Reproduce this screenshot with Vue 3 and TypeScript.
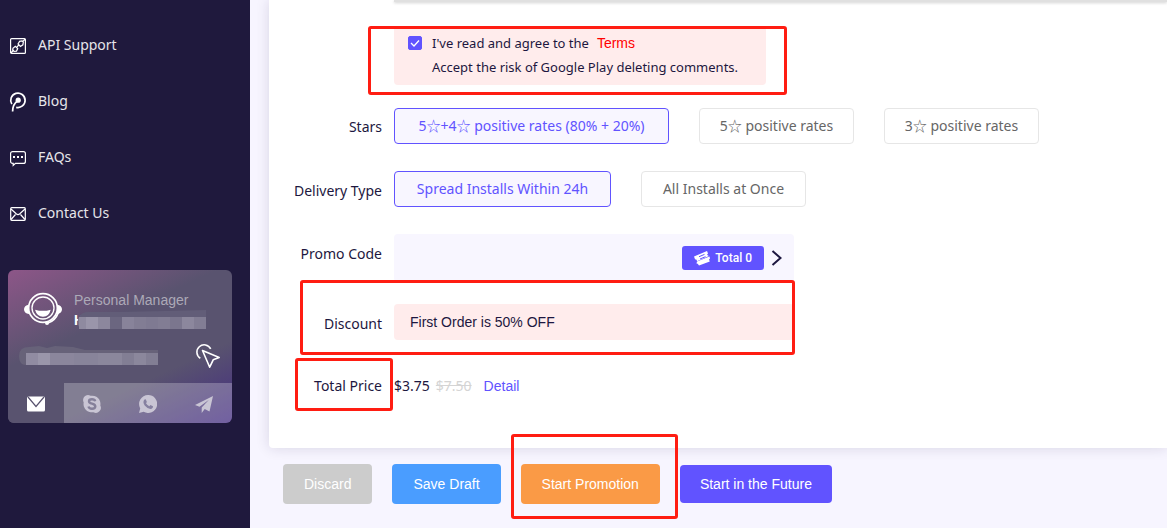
<script setup lang="ts">
import { ref } from 'vue'

const nav = [
  { id: 'api', label: 'API Support' },
  { id: 'blog', label: 'Blog' },
  { id: 'faq', label: 'FAQs' },
  { id: 'contact', label: 'Contact Us' },
]
const channels = [
  { id: 'mail', label: 'Email' },
  { id: 'skype', label: 'Skype' },
  { id: 'whatsapp', label: 'WhatsApp' },
  { id: 'telegram', label: 'Telegram' },
]
const starOptions = ['5☆+4☆ positive rates (80% + 20%)', '5☆ positive rates', '3☆ positive rates']
const deliveryOptions = ['Spread Installs Within 24h', 'All Installs at Once']

const agreed = ref(true)
const channel = ref('mail')
const stars = ref(starOptions[0])
const delivery = ref(deliveryOptions[0])

const nameTiles = ['#8f8aa0', '#9a95aa', '#8c879d', '#6b6680', '#88839a', '#827d94', '#7f7a92', '#827d94', '#7b768e', '#8c879d', '#827d94']
const mailTiles = ['#918ca2', '#9a96aa', '#8b869c', '#8b869c', '#88849a', '#88849a', '#8b879c', '#8b879c', '#827e94', '#8b879c', '#827e94']
</script>

<template>
  <div class="page">
    <aside class="sidebar">
      <nav class="nav">
        <a v-for="item in nav" :key="item.id" href="#" class="nav-link">
          <svg v-if="item.id === 'api'" class="nav-icon" viewBox="0 0 16 20">
            <rect x="0.6" y="3.6" width="14.8" height="14.8" rx="1" />
            <path d="M1 18l2.600-3M12.700 6.600L15.200 4M6.500 12.500l2.600-2.800" />
            <path d="M3 13.200l2.300-1.800 2.400 2.200-1.200 2.500-2.500.3-1.300-1.500zM8 9l1.600-2.600 2.500-.5 1.200 1.300-.4 2.600L10.400 11.400z" />
          </svg>
          <svg v-else-if="item.id === 'blog'" class="nav-icon bold" viewBox="0 0 16 20">
            <path d="M1.800 13.100A7.200 7.200 0 1 1 6.200 16.300" />
            <path d="M7.500 10C4.500 12 2.600 15 2.600 20.500" />
            <circle class="solid" cx="8.200" cy="9.200" r="2.600" />
          </svg>
          <svg v-else-if="item.id === 'faq'" class="nav-icon" viewBox="0 0 16 20">
            <path d="M2.600 4.600h10.800a2 2 0 0 1 2 2v7.800a2 2 0 0 1-2 2H5.500L3.200 18.500V16.400H2.600a2 2 0 0 1-2-2V6.600a2 2 0 0 1 2-2z" />
            <path class="solid" d="M3 9h2v2H3zM7 9h2v2H7zM11 9h2v2h-2z" />
          </svg>
          <svg v-else class="nav-icon" viewBox="0 0 16 20">
            <rect x="0.700" y="4.700" width="14.600" height="12.600" rx="1" />
            <path d="M1 6l5.200 4.800q1.800 1.500 3.600 0L15 6M1 16.500l4.500-5M15 16.500l-4.500-5" />
          </svg>
          <span>{{ item.label }}</span>
        </a>
      </nav>

      <section class="manager">
        <div class="manager-head">
          <svg class="avatar" viewBox="0 0 114 98">
            <circle cx="57" cy="46" r="43" fill="none" stroke="#fff" stroke-width="5" />
            <circle cx="57" cy="46" r="33" fill="none" stroke="#fff" stroke-width="4" />
            <path d="M15 36v28Q0 62 0 50T15 36zM99 36v28q15-2 15-14T99 36z" fill="#fff" />
            <path d="M33 51q24 7 47 0-5 21-23 21T33 51z" fill="#fff" />
            <path d="M103 60Q94 84 72 91" fill="none" stroke="#fff" stroke-width="5" />
            <circle cx="69" cy="91" r="6" fill="#fff" />
          </svg>
          <div>
            <div class="role">Personal Manager</div>
            <div class="name">
              <b>H</b>
              <svg class="tiles" viewBox="0 0 132 20">
                <path d="M5 7Q8 2 14 2H44L92 1 132 0V7z" fill="#625d78" />
                <path d="M5 7h8v12H6Q2 12 5 7z" fill="#77728a" />
                <rect v-for="(c, i) in nameTiles" :key="i" :x="i ? 12 + (i - 1) * 12 : 5" y="7" :width="i ? 12 : 7" height="12" :fill="c" />
              </svg>
            </div>
          </div>
        </div>
        <div class="manager-mail">
          <svg class="mail-tiles" viewBox="0 0 140 20">
            <path d="M7 19Q0 19 0 10T10 1L20 0 28 2 36 0 54 1 66 4H139V9L7 19z" fill="#676279" />
            <rect v-for="(c, i) in mailTiles" :key="i" :x="7 + i * 12" y="7" width="12" height="12" :fill="c" />
          </svg>
          <svg class="pointer" viewBox="0 0 24 24">
            <path d="M6.500 6.500l16.700 7-6 2.300-3.500 7.400z" />
            <path d="M4.300 14.300A7.300 7.300 0 1 1 14.700 4.800" />
          </svg>
        </div>
        <div class="channels">
          <button
            v-for="c in channels"
            :key="c.id"
            type="button"
            class="channel"
            :class="{ active: channel === c.id }"
            :aria-label="c.label"
            @click="channel = c.id"
          >
            <svg viewBox="0 0 18 18">
              <template v-if="c.id === 'mail'">
                <rect y="1.500" width="18" height="15" rx="1.500" />
                <path class="cut" d="M1 2l8 9.500L17 2" />
              </template>
              <template v-else-if="c.id === 'skype'">
                <path d="M5 0a5 5 0 0 0-4.300 7.400A8.300 8.300 0 0 0 10.500 17.200 5 5 0 0 0 17.300 10.500 8.300 8.300 0 0 0 7.500.8 5 5 0 0 0 5 0z" />
                <path class="cut thick" d="M12.200 6.200Q11.700 4.300 9 4.300 6 4.300 6 6.300 6 8 9 8.700T12.300 11.300Q12.300 13.700 9 13.700 6 13.700 5.500 11.500" />
              </template>
              <template v-else-if="c.id === 'whatsapp'">
                <path d="M9 0a9 9 0 0 0-7.800 13.400L0 18l4.700-1.200A9 9 0 1 0 9 0z" />
                <path class="hole" d="M5.500 4.500l1.200-.2 1.200 2.700-.9 1.300Q8.300 10.500 10.300 11.300L11.400 10l2.600 1.200q.2 2.400-2.500 2.700Q8.500 14 5.700 10.600 3.300 7 5.500 4.500z" />
              </template>
              <template v-else>
                <path d="M18 1L0 10l4.500 1.700L14 4.800 6.700 12.500V18l3-4 4.800 2.600z" />
              </template>
            </svg>
          </button>
        </div>
      </section>
    </aside>

    <main class="main">
      <form class="card" @submit.prevent>
        <div class="row row-top"><div class="strip"></div></div>

        <div class="row row-terms">
          <div class="terms">
            <input id="agree" v-model="agreed" type="checkbox" class="check" />
            <div>
              <label for="agree">I've read and agree to the</label>
              <a href="#" class="terms-link">Terms</a>
              <div>Accept the risk of Google Play deleting comments.</div>
            </div>
            <span class="mark mark-terms"></span>
          </div>
        </div>

        <div class="row row-stars" role="group" aria-labelledby="l-stars">
          <span id="l-stars" class="label">Stars</span>
          <div class="options star-options">
            <button v-for="o in starOptions" :key="o" type="button" class="option" :class="{ on: stars === o }" @click="stars = o">{{ o }}</button>
          </div>
        </div>

        <div class="row row-delivery" role="group" aria-labelledby="l-delivery">
          <span id="l-delivery" class="label">Delivery Type</span>
          <div class="options delivery-options">
            <button v-for="o in deliveryOptions" :key="o" type="button" class="option" :class="{ on: delivery === o }" @click="delivery = o">{{ o }}</button>
          </div>
        </div>

        <div class="row row-promo">
          <span class="label">Promo Code</span>
          <div class="promo">
            <button type="button" class="total">
              <svg viewBox="0 0 16 16">
                <path d="M0 6.500L13 1l1 2.500-1 1.200 1.300 1 .7.300L3 11.200 2.600 9.700 1 9.200z" fill="#fff" />
                <path d="M3 11.600L15.500 6.500l.5 2-1 1 .8 2L5 15.500 3.700 13.800 2.500 13.500z" fill="#fff" />
                <path d="M5 6.700L10.500 4.400M6 9L11.500 6.700" stroke="#6153ff" stroke-width="1" />
              </svg>
              <span>Total 0</span>
            </button>
            <button type="button" class="next" aria-label="Open promo codes">
              <svg viewBox="0 0 10 16"><path d="M1 1l8 7-8 7" fill="none" stroke="#1d1740" stroke-width="2" /></svg>
            </button>
          </div>
        </div>

        <div class="row row-discount">
          <span class="label">Discount</span>
          <div class="discount">First Order is 50% OFF</div>
          <span class="mark mark-discount"></span>
        </div>

        <div class="row row-price">
          <span class="label">Total Price<span class="mark mark-price"></span></span>
          <div class="price">
            <span>$3.75</span>
            <s>$7.50</s>
            <a href="#">Detail</a>
          </div>
        </div>
      </form>

      <div class="actions">
        <button type="button" class="act discard">Discard</button>
        <button type="button" class="act draft">Save Draft</button>
        <div class="marked">
          <button type="button" class="act start">Start Promotion</button>
          <span class="mark mark-start"></span>
        </div>
        <button type="button" class="act future">Start in the Future</button>
      </div>
    </main>
  </div>
</template>

<style>
body {
  margin: 0;
  background: #f7f5ff;
}
</style>

<style scoped>
* {
  box-sizing: border-box;
}
.page {
  display: flex;
  min-height: 100vh;
  overflow: hidden;
  font: 14px/20px "Noto Sans", "Open Sans", "Noto Sans CJK SC", sans-serif;
  color: #1d1740;
}
button {
  margin: 0;
  font: inherit;
  cursor: pointer;
}
a {
  text-decoration: none;
}
.sidebar {
  flex: none;
  width: 250px;
  padding: 17px 8px 0;
  background: #1f193d;
}
.nav-link {
  display: flex;
  align-items: center;
  gap: 12px;
  height: 56px;
  padding-left: 2px;
  color: #e6e5ea;
}
.nav-icon {
  width: 16px;
  height: 20px;
  overflow: visible;
  fill: none;
  stroke: #fff;
  stroke-width: 1.2;
}
.nav-icon.bold {
  stroke-width: 1.7;
}
.nav-icon .solid {
  fill: #fff;
  stroke: none;
}
.manager {
  width: 224px;
  margin-top: 29px;
  overflow: hidden;
  border-radius: 6px;
  background: linear-gradient(155deg, #8d5688 0%, #59536f 38%, #59536f 68%, #432b82 100%);
}
.manager-head {
  display: flex;
  gap: 12px;
  height: 69px;
  padding: 22px 16px 0;
}
.avatar {
  width: 38px;
  height: 34px;
}
.role {
  height: 17px;
  font: 14px/16px "Liberation Sans", Arial, sans-serif;
  color: #aca9b7;
}
.name {
  position: relative;
  height: 22px;
  font: 14px/22px "Liberation Sans", Arial, sans-serif;
  color: #fff;
}
.tiles {
  position: absolute;
  top: 1px;
  left: 0;
  width: 132px;
  height: 20px;
}
.manager-mail {
  display: flex;
  align-items: center;
  justify-content: space-between;
  height: 44px;
  padding: 0 12px 10px 11px;
}
.mail-tiles {
  width: 140px;
  height: 20px;
}
.pointer {
  width: 24px;
  height: 24px;
  overflow: visible;
  fill: none;
  stroke: #fff;
  stroke-width: 1.6;
  stroke-linejoin: round;
}
.channels {
  display: grid;
  grid-template-columns: repeat(4, 1fr);
}
.channel {
  height: 40px;
  padding: 0;
  border: 0;
  background: rgba(255, 255, 255, 0.25);
}
.channel.active {
  background: #59536f;
}
.channel svg {
  display: block;
  width: 18px;
  height: 18px;
  margin: 2px auto 0;
  fill: #c9c5d4;
}
.channel.active svg {
  fill: #fff;
}
.channel .cut {
  fill: none;
  stroke: #59536f;
  stroke-width: 1.2;
}
.channel .thick {
  stroke: #85809a;
  stroke-width: 2.4;
}
.channel .hole {
  fill: #8680a0;
}
.main {
  flex: 1;
  min-width: 0;
  padding-left: 19px;
}
.card {
  padding-bottom: 51px;
  border-radius: 0 0 0 4px;
  background: #fff;
  box-shadow: 0 0 14px rgba(29, 23, 64, 0.14);
}
.row {
  position: relative;
  display: grid;
  grid-template-columns: 113px 1fr;
  column-gap: 12px;
  font-size: 14px;
}
.label {
  position: relative;
  text-align: right;
}
.row-top {
  height: 2px;
}
.strip {
  grid-column: 2;
  background: #e0e0e0;
  box-shadow: 0 1px 3px rgba(0, 0, 0, 0.2);
}
.row-terms {
  margin-top: 24px;
}
.terms {
  position: relative;
  grid-column: 2;
  display: flex;
  gap: 10px;
  width: 372px;
  height: 59px;
  padding: 5px 14px;
  border-radius: 4px;
  background: #ffecec;
  font-size: 13px;
  line-height: 24px;
  white-space: nowrap;
}
.check {
  flex: none;
  width: 14px;
  height: 14px;
  margin: 5px 0 0;
  appearance: none;
  border: 1px solid #6153ff;
  border-radius: 2px;
}
.check:checked {
  background: #6153ff url("data:image/svg+xml,%3Csvg xmlns='http://www.w3.org/2000/svg' viewBox='0 0 12 12'%3E%3Cpath d='M2 6l3 3 5-5.500' fill='none' stroke='white' stroke-width='1.300'/%3E%3C/svg%3E") center / 12px 12px;
}
.terms-link {
  margin-left: 8px;
  font: 14px/20px "Liberation Sans", Arial, sans-serif;
  color: #ff0000;
}
.mark {
  position: absolute;
  border: 3px solid #ff1d12;
  border-radius: 3px;
  pointer-events: none;
}
.mark-terms {
  inset: 0 -21px -10px -26px;
}
.row-stars {
  height: 36px;
  margin-top: 23px;
  line-height: 38px;
}
.row-delivery {
  height: 36px;
  margin-top: 27px;
  line-height: 40px;
}
.options {
  display: grid;
  column-gap: 30px;
}
.star-options {
  grid-template-columns: 275px 155px 155px;
}
.delivery-options {
  grid-template-columns: 217px 165px;
}
.option {
  height: 36px;
  padding: 0;
  border: 1px solid #e6e6e6;
  border-radius: 4px;
  background: #fff;
  color: #666;
  line-height: 34px;
  white-space: nowrap;
}
.option.on {
  border-color: #6153ff;
  background: #f8f6ff;
  color: #6153ff;
}
.row-promo {
  margin-top: 27px;
  line-height: 40px;
}
.promo {
  display: flex;
  align-items: center;
  justify-content: flex-end;
  gap: 7px;
  width: 400px;
  height: 48px;
  padding-right: 12px;
  border-radius: 4px;
  background: #f8f6ff;
}
.total {
  display: flex;
  align-items: center;
  gap: 5px;
  height: 24px;
  padding: 0 12px;
  border: 0;
  border-radius: 3px;
  background: #6153ff;
  color: #fff;
  font: 500 12px/24px Roboto, sans-serif;
}
.total svg {
  width: 16px;
  height: 16px;
}
.next {
  display: flex;
  padding: 0;
  border: 0;
  background: none;
}
.next svg {
  width: 11px;
  height: 16px;
}
.row-discount {
  height: 36px;
  margin-top: 22px;
  line-height: 40px;
}
.discount {
  width: 400px;
  height: 36px;
  padding-left: 16px;
  border-radius: 4px;
  background: #ffecec;
  font: 14px/36px "Liberation Sans", Arial, sans-serif;
}
.mark-discount {
  top: -24px;
  bottom: -15px;
  left: 31px;
  width: 495px;
}
.row-price {
  margin-top: 35px;
  line-height: 22px;
}
.price {
  display: flex;
  gap: 6px;
}
.price s {
  color: #d4d4d4;
}
.price a {
  margin-left: 6px;
  font-family: "Liberation Sans", Arial, sans-serif;
  color: #6153ff;
}
.mark-price {
  inset: -17px -11px -14px auto;
  width: 98px;
}
.actions {
  display: flex;
  align-items: center;
  gap: 20px;
  padding: 16px 14px 24px;
}
.act {
  height: 40px;
  padding: 0 21px;
  border: 0;
  border-radius: 4px;
  color: #fff;
  font: 14px/40px "Liberation Sans", Arial, sans-serif;
  white-space: nowrap;
}
.discard {
  background: #cccccc;
}
.draft {
  background: #4a9dff;
}
.start {
  background: #fa9a46;
}
.future {
  height: 38px;
  padding: 0 20px;
  background: #6153ff;
  line-height: 38px;
}
.marked {
  position: relative;
}
.mark-start {
  inset: -30px -18px -15px -10px;
}
</style>
